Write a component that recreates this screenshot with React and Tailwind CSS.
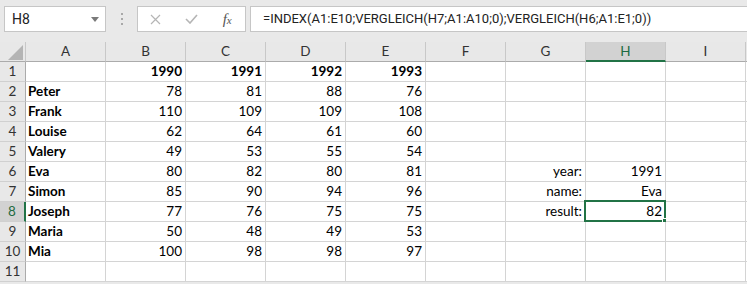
import React from "react";

const cols = ["A", "B", "C", "D", "E", "F", "G", "H", "I", ""];

const rows = [
  { n: 1, cells: ["", "1990", "1991", "1992", "1993"], bold: true },
  { n: 2, cells: ["Peter", "78", "81", "88", "76"] },
  { n: 3, cells: ["Frank", "110", "109", "109", "108"] },
  { n: 4, cells: ["Louise", "62", "64", "61", "60"] },
  { n: 5, cells: ["Valery", "49", "53", "55", "54"] },
  { n: 6, cells: ["Eva", "80", "82", "80", "81"], g: "year:", h: "1991" },
  { n: 7, cells: ["Simon", "85", "90", "94", "96"], g: "name:", h: "Eva" },
  { n: 8, cells: ["Joseph", "77", "76", "75", "75"], g: "result:", h: "82" },
  { n: 9, cells: ["Maria", "50", "48", "49", "53"] },
  { n: 10, cells: ["Mia", "100", "98", "98", "97"] },
  { n: 11, cells: ["", "", "", "", ""] },
];

const cellFont = { fontFamily: "Lato, 'Liberation Sans', sans-serif" };
const uiFont = { fontFamily: "Roboto, 'Liberation Sans', sans-serif" };

function ColHeader({ label }) {
  const active = label === "H";
  return (
    <div
      className={`h-[20px] border-r border-[#c8c8c8] flex items-center justify-center text-[13.5px] ${
        active
          ? "bg-[#d2d2d2] text-[#1e6b41] border-b-2 border-b-[#217346]"
          : "bg-[#e8e8e8] text-[#333] border-b border-b-[#ababab]"
      }`}
    >
      {label}
    </div>
  );
}

function Cell({ children, align = "right", bold, selected }) {
  return (
    <div
      className={`relative h-[20px] border-r border-b border-[#d4d4d4] bg-white flex items-center text-[13.5px] text-black ${
        align === "left" ? "justify-start pl-[2px]" : "justify-end pr-[3px]"
      } ${bold ? "font-bold" : ""}`}
    >
      {children}
      {selected && (
        <>
          <div className="absolute left-[-2px] top-[-2px] w-[82px] h-[22px] border-2 border-[#217346]" />
          <div className="absolute left-[76px] top-[16px] w-[6px] h-[6px] bg-[#217346] border border-white" />
        </>
      )}
    </div>
  );
}

export default function App() {
  return (
    <div
      className="w-[747px] h-[284px] overflow-hidden bg-[#e9e9e9] flex flex-col"
      style={cellFont}
    >
      <div className="h-[42px] flex items-start pt-[6px] pl-[4px] shrink-0">
        <div
          className="w-[102px] h-[26px] bg-white border border-[#c6c6c6] flex items-center justify-between pl-[7px] pr-[6px] text-[14px] text-[#222]"
          style={uiFont}
        >
          <span>H8</span>
          <svg width="8" height="5" viewBox="0 0 8 5">
            <path d="M0 0 L8 0 L4 5 Z" fill="#7a7a7a" />
          </svg>
        </div>
        <div className="w-[31px] h-[26px] flex flex-col items-center justify-center gap-[3px]">
          <div className="w-[2px] h-[2px] bg-[#a8a8a8]" />
          <div className="w-[2px] h-[2px] bg-[#a8a8a8]" />
          <div className="w-[2px] h-[2px] bg-[#a8a8a8]" />
        </div>
        <div className="w-[109px] h-[26px] bg-white border border-[#c6c6c6] flex items-center">
          <div className="w-[36px] flex justify-center">
            <svg width="11" height="11" viewBox="0 0 11 11">
              <path d="M1 1 L10 10 M10 1 L1 10" stroke="#b5b5b5" strokeWidth="1.2" />
            </svg>
          </div>
          <div className="w-[36px] flex justify-center">
            <svg width="13" height="10" viewBox="0 0 13 10">
              <path d="M1 5 L5 9 L12 1" stroke="#b5b5b5" strokeWidth="1.6" fill="none" />
            </svg>
          </div>
          <div
            className="w-[36px] flex justify-center italic text-[15px] text-[#555]"
            style={{ fontFamily: "'Liberation Serif', serif" }}
          >
            <span>
              f<span className="text-[11px]">x</span>
            </span>
          </div>
        </div>
        <div
          className="ml-[4px] flex-1 h-[26px] bg-white border border-[#c6c6c6] border-r-0 flex items-center pl-[12px] text-[13px] text-[#222] whitespace-nowrap"
          style={uiFont}
        >
          =INDEX(A1:E10;VERGLEICH(H7;A1:A10;0);VERGLEICH(H6;A1:E1;0))
        </div>
      </div>

      <div className="grid grid-cols-[26px_repeat(10,80px)] auto-rows-[20px]">
        <div className="h-[20px] bg-[#e8e8e8] border-r border-b border-r-[#c8c8c8] border-b-[#ababab] flex items-end justify-end pr-[2px] pb-[1px]">
          <svg width="15" height="15" viewBox="0 0 15 15">
            <path d="M15 0 L15 15 L0 15 Z" fill="#b4b4b4" />
          </svg>
        </div>
        {cols.map((c, i) => (
          <ColHeader key={i} label={c} />
        ))}

        {rows.map((r) => (
          <React.Fragment key={r.n}>
            <div
              className={`h-[20px] border-b border-[#d0d0d0] flex items-center justify-center text-[13.5px] ${
                r.n === 8
                  ? "bg-[#d2d2d2] text-[#1e6b41] border-r-2 border-r-[#217346]"
                  : "bg-[#e8e8e8] text-[#333] border-r border-r-[#ababab]"
              }`}
            >
              {r.n}
            </div>
            <Cell align="left" bold>
              {r.cells[0]}
            </Cell>
            {r.cells.slice(1).map((v, i) => (
              <Cell key={i} bold={r.bold}>
                {v}
              </Cell>
            ))}
            <Cell />
            <Cell>{r.g}</Cell>
            <Cell selected={r.n === 8}>{r.h}</Cell>
            <Cell />
            <Cell />
          </React.Fragment>
        ))}
      </div>
    </div>
  );
}
